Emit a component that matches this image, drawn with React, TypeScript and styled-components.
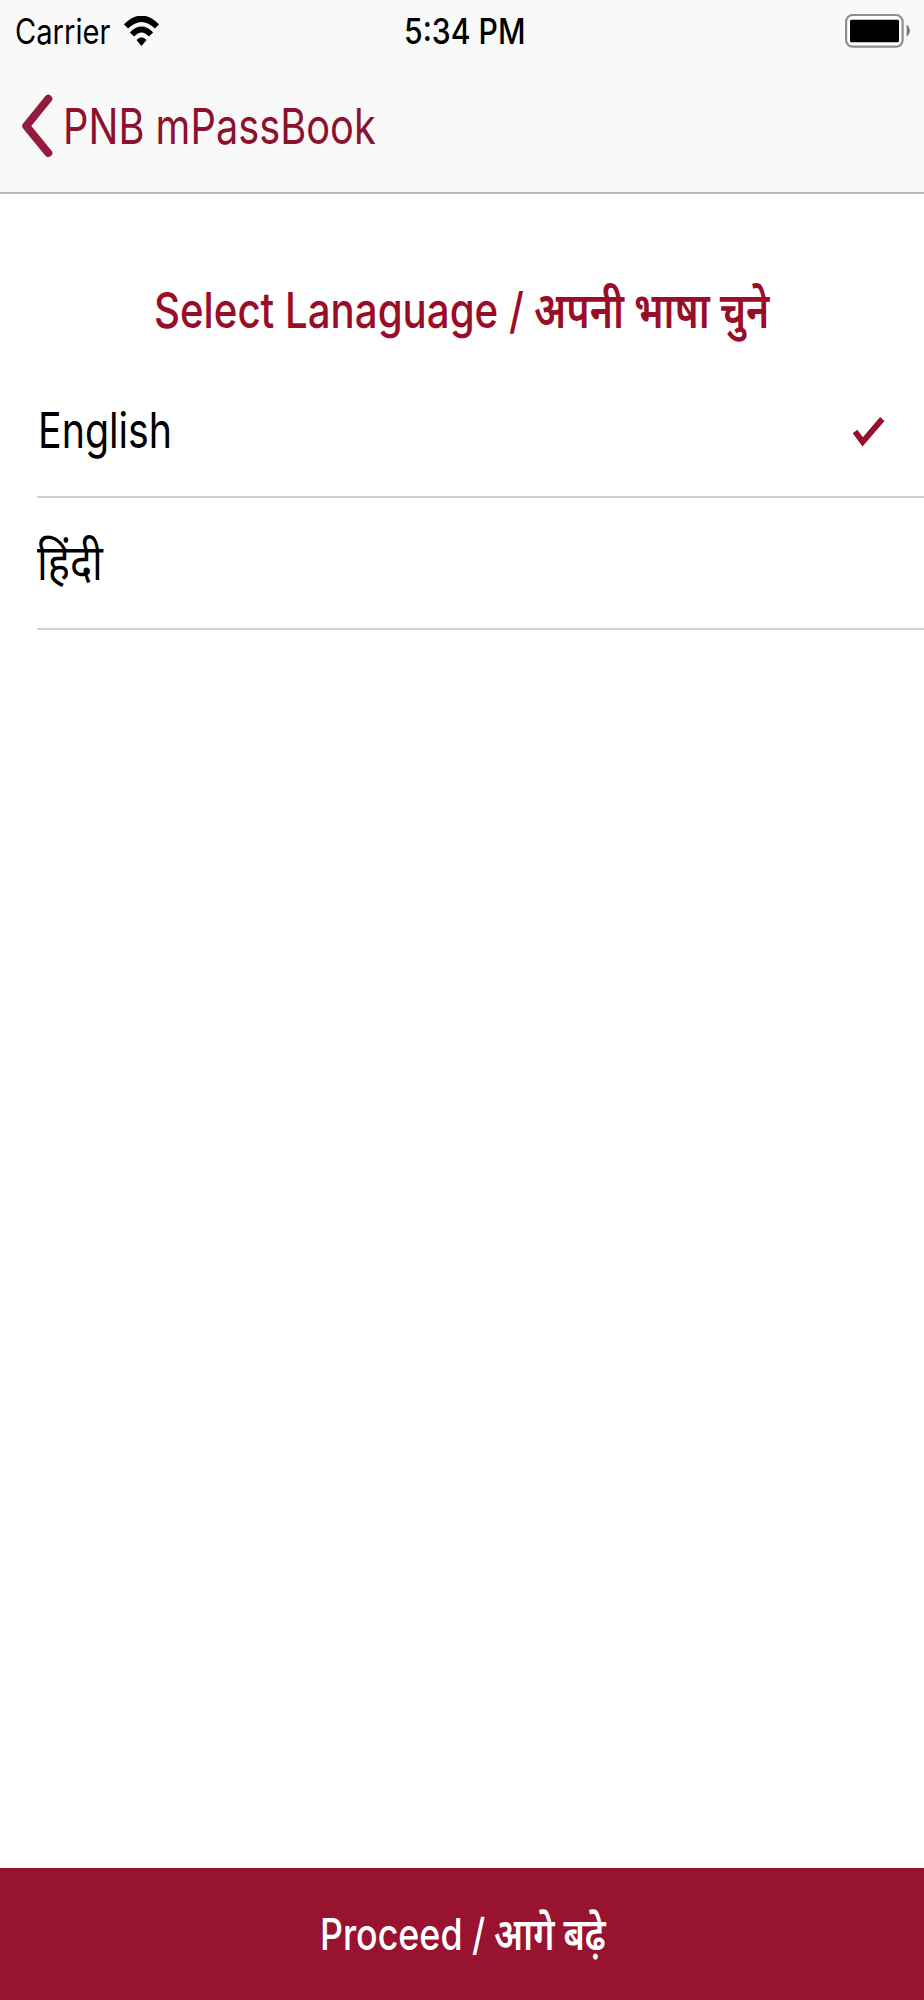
import React from 'react';
import styled, { createGlobalStyle } from 'styled-components';

const GlobalStyle = createGlobalStyle`
  * { box-sizing: border-box; }
  body { margin: 0; background: #fff; font-family: Inter, "Noto Sans", "Noto Sans Devanagari", sans-serif; }
`;
const Screen = styled.div`
  display: flex;
  flex-direction: column;
  width: 924px;
  height: 2000px;
  overflow: hidden;
  background: #fff;
`;
const Header = styled.header`
  height: 194px;
  background: #f9f9f9;
  border-bottom: 2px solid #b8b8ba;
`;
const StatusBar = styled.div`
  display: grid;
  grid-template-columns: 389px 1fr auto;
  align-items: center;
  height: 62px;
  padding: 0 13px 0 15px;
`;
const Network = styled.div`
  display: flex;
  align-items: center;
`;
/* Text is condensed horizontally inside a box of its drawn width. */
const TextBox = styled.span<{ $w: number }>`
  display: block;
  width: ${p => p.$w}px;
  flex: none;
`;
const Condensed = styled.span<{ $size: number; $scale: number; $weight?: number; $color?: string }>`
  display: block;
  width: max-content;
  white-space: pre;
  font-size: ${p => p.$size}px;
  line-height: 60px;
  font-weight: ${p => p.$weight ?? 400};
  color: ${p => p.$color ?? '#000'};
  transform: scaleX(${p => p.$scale});
  transform-origin: left center;
`;
const BackButton = styled.button`
  display: flex;
  align-items: flex-end;
  gap: 10px;
  margin-top: 32px;
  padding: 0 0 0 21px;
  border: 0;
  background: none;
  font-family: inherit;
  text-align: left;
`;
const BackLabel = styled.span`
  padding-bottom: 1px;
`;
const Title = styled.h1`
  display: flex;
  margin: 87px 0 0 154px;
  height: 60px;
`;
const List = styled.ul`
  list-style: none;
  margin: 25px 0 0;
  padding: 0 0 0 37px;
`;
const Option = styled.li<{ $inset?: number }>`
  display: flex;
  align-items: center;
  justify-content: space-between;
  height: 132px;
  padding: 0 39px 0 ${p => p.$inset ?? 0}px;
  border-bottom: 2px solid #d2d1d6;
`;
const Proceed = styled.button`
  display: flex;
  align-items: center;
  height: 132px;
  margin-top: auto;
  padding: 0 0 0 320px;
  border: 0;
  background: #97132f;
  font-family: inherit;
  text-align: left;
`;
type LabelProps = { w: number; size: number; scale: number; weight?: number; color?: string; children: React.ReactNode };
const Label = ({ w, size, scale, weight, color, children }: LabelProps) => (
  <TextBox $w={w}>
    <Condensed $size={size} $scale={scale} $weight={weight} $color={color}>{children}</Condensed>
  </TextBox>
);

export default function App() {
  return (
    <Screen>
      <GlobalStyle />
      <Header>
        <StatusBar>
          <Network>
            <Label w={109} size={35} scale={0.832}>Carrier</Label>
            <svg width="35" height="30" viewBox="0 0 35 30">
              <path d="M2 10.500Q17.500-5 33 10.500M8 18.500Q17.500 8.500 27 18.500" fill="none" stroke="#000" strokeWidth="6" />
              <path d="M12.500 24Q17.500 18.500 22.500 24L17.500 30Z" />
            </svg>
          </Network>
          <Label w={122} size={35} scale={0.862} weight={550}>5:34 PM</Label>
          <svg width="66" height="36" viewBox="0 0 66 36">
            <rect x="1.100" y="2" width="56.500" height="31.700" rx="6.500" fill="#fff" stroke="#8d8d8d" strokeWidth="2.200" />
            <rect x="5" y="6.700" width="49" height="22.500" rx="1.500" />
            <path d="M61.700 11.300Q68.300 17.500 61.700 23.700Z" fill="#777" />
          </svg>
        </StatusBar>
        <BackButton>
          <svg width="32" height="64" viewBox="0 0 32 64">
            <path d="M27.300 4.800L5.200 32L27.300 59" fill="none" stroke="#921b3e" strokeWidth="8" strokeLinecap="round" strokeLinejoin="round" />
          </svg>
          <BackLabel>
            <Label w={312} size={49} scale={0.812} color="#8c112f">PNB mPassBook</Label>
          </BackLabel>
        </BackButton>
      </Header>
      <Title>
        <Label w={380} size={49} scale={0.821} weight={500} color="#990d27">Select Lanaguage /</Label>
        <Label w={240} size={49} scale={0.803} weight={600} color="#990d27">अपनी भाषा चुने</Label>
      </Title>
      <List>
        <Option $inset={1}>
          <Label w={140} size={49} scale={0.803}>English</Label>
          <svg width="33" height="32" viewBox="0 0 33 32">
            <path d="M3 16.500L10.700 26.800L30.300 4" fill="none" stroke="#990d2f" strokeWidth="5.800" />
          </svg>
        </Option>
        <Option><Label w={80} size={49} scale={0.85}>हिंदी</Label></Option>
      </List>
      <Proceed>
        <Label w={174} size={44} scale={0.813} weight={500} color="#fff">Proceed /</Label>
        <Label w={120} size={44} scale={0.81} weight={600} color="#fff">आगे बढ़े</Label>
      </Proceed>
    </Screen>
  );
}
